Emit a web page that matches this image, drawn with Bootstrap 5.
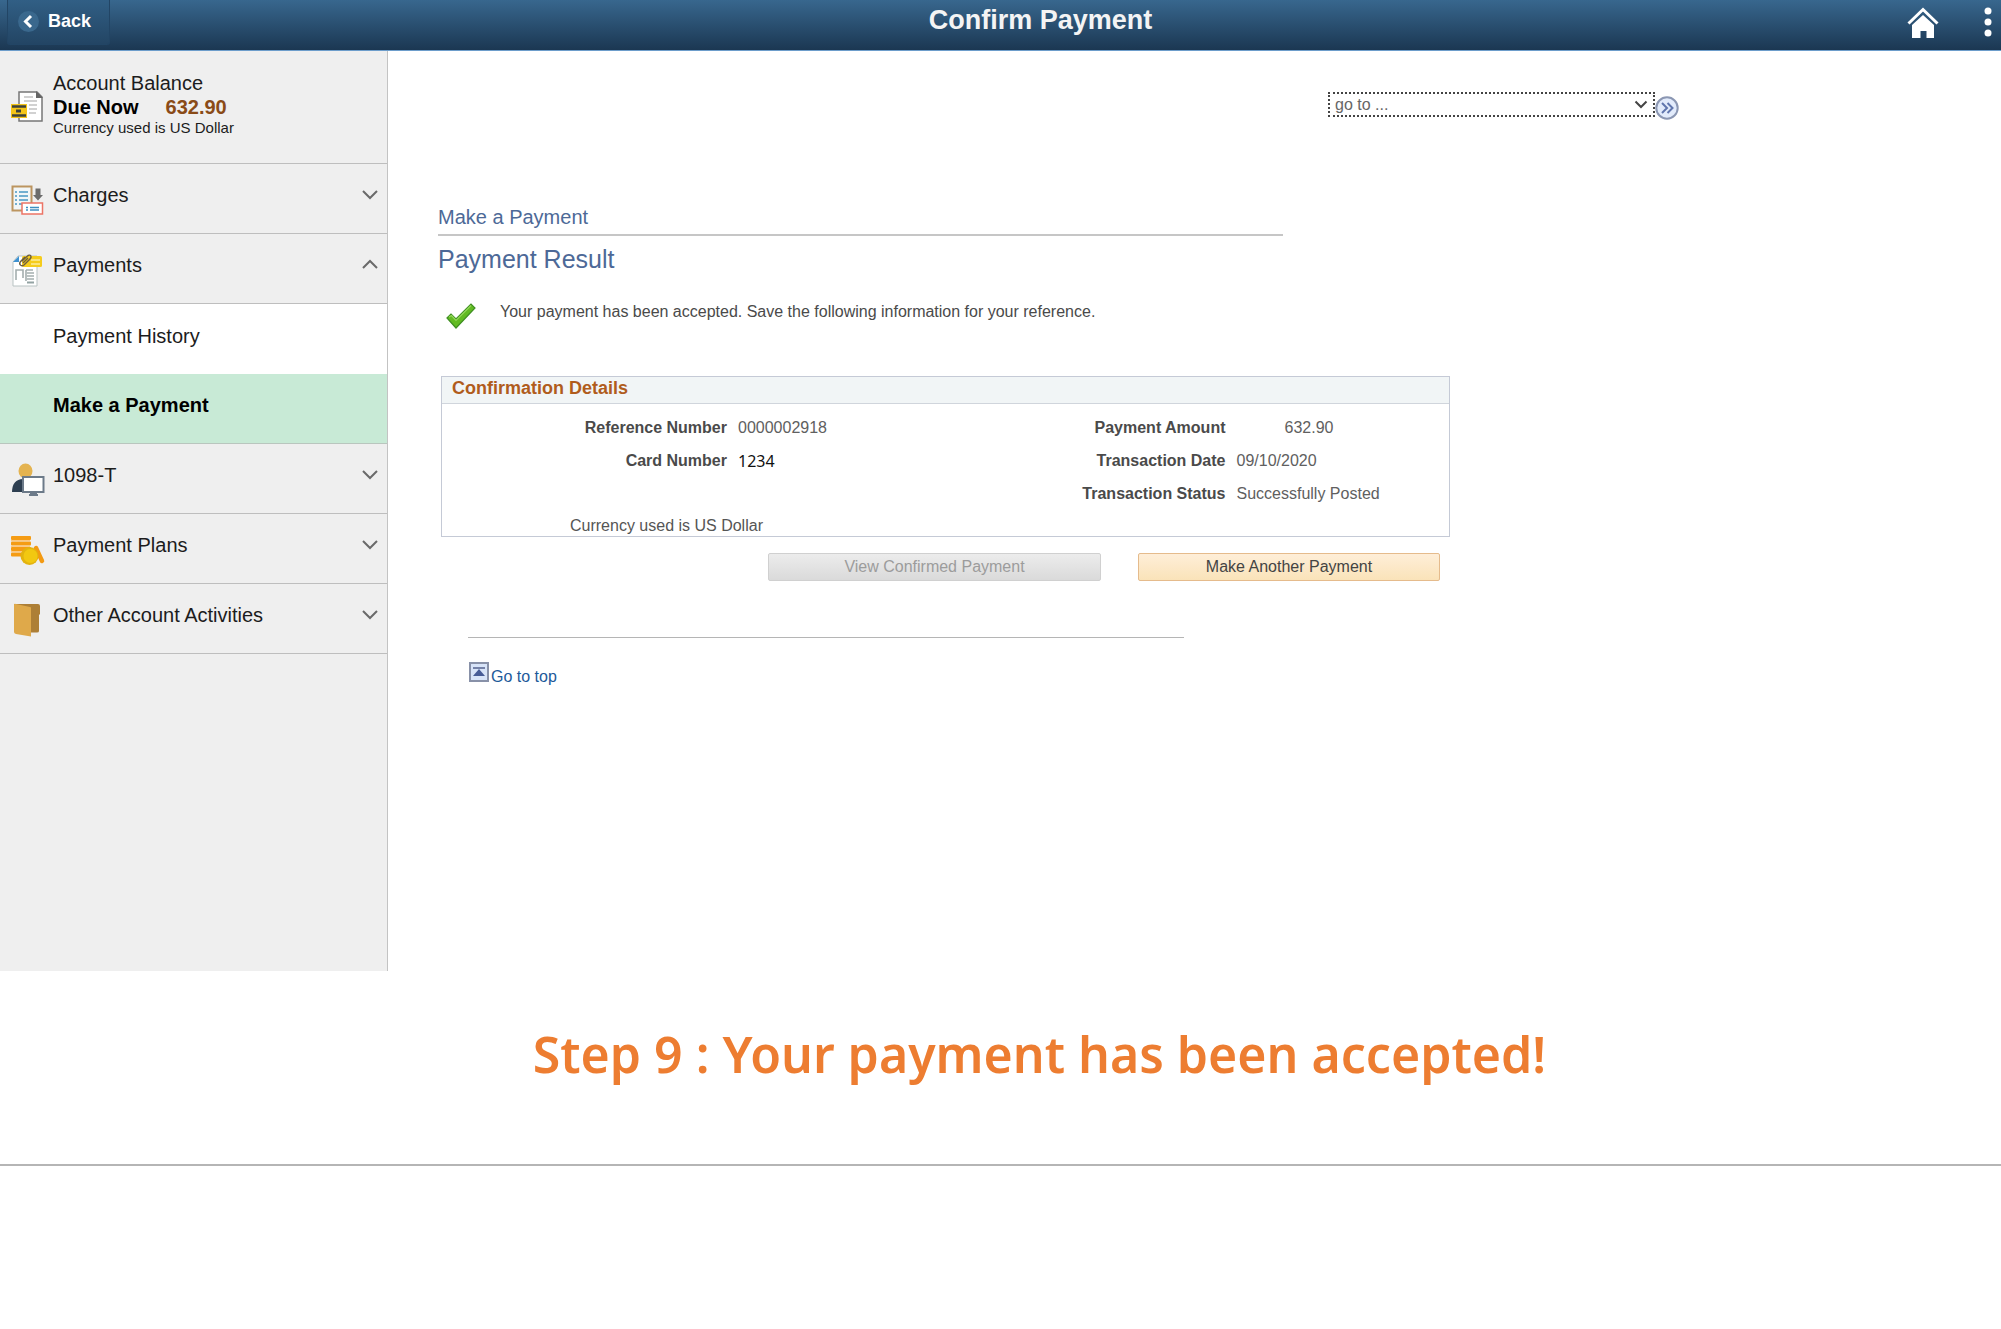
<!DOCTYPE html>
<html lang="en">
<head>
<meta charset="utf-8">
<meta name="viewport" content="width=device-width, initial-scale=1">
<title>Confirm Payment</title>
<link href="https://cdn.jsdelivr.net/npm/bootstrap@5.3.0/dist/css/bootstrap.min.css" rel="stylesheet">
<style>
  body { font-family: "Liberation Sans", Arial, sans-serif; font-size: 16px; line-height: 20px; color: #4a4a4a; background: #fff; }
  .topbar { height: 51px; background: linear-gradient(#38678e, #1b3752); border-bottom: 1px solid #6d9dcb; }
  .back-btn { height: 45px; margin-left: 7px; padding: 0 18px 2px 10px; font-size: 18px; font-weight: 700; color: #fff; background: linear-gradient(#315f85, #234564); border: 1px solid #224565; border-top: 0; border-radius: 0 0 3px 3px; gap: 9px; }
  .page-title { font-size: 27px; line-height: 32px; font-weight: 700; color: #f4f4f4; padding: 4px 0 0 70px; }
  .bar-tools { width: 100px; padding: 0 8px 6px 5px; }

  .shell { min-height: 920px; }
  .side { width: 388px; background: #efefef; border-right: 1px solid #c3c3c3; font-size: 20px; line-height: 24px; color: #1c1c1c; }
  .balance { height: 113px; padding: 0 0 0 11px; border-bottom: 1px solid #bebebe; }
  .balance-text { padding-bottom: 6px; line-height: 24px; }
  .balance-note { font-size: 15px; line-height: 18px; }
  .due { color: #8a4b17; margin-left: 27px; }
  .side-row { height: 70px; padding: 0 9px 0 11px; gap: 8px; width: 100%; border: 0; border-bottom: 1px solid #bebebe; background: #efefef; color: inherit; text-align: left; text-decoration: none; }
  .side-row .lift { padding-bottom: 7px; }
  .side-row .ico { margin-top: 3px; }
  .side-row.sub { padding-left: 53px; border-bottom: 0; background: #fff; }
  .side-row.sub.current { background: #c8ead6; color: #000; font-weight: 700; border-bottom: 1px solid #b9c6be; }
  .ico { width: 34px; height: 34px; flex: none; }

  .main-area { padding: 41px 50px 0; }
  .goto { padding-left: 890px; }
  .goto select { width: 327px; height: 25px; padding: 0 22px 0 5px; border: 2px dotted #444; outline: 0; appearance: none; color: #666; font-size: 16px; background: #fff; }
  .select-wrap svg { right: 7px; top: 8px; pointer-events: none; }
  .round-go { width: 24px; height: 24px; margin-top: 4px; }
  .crumb { max-width: 845px; margin-top: 85px; font-size: 20px; line-height: 24px; padding-bottom: 5px; border-bottom: 2px solid #c6c6c6; color: #4d6997; }
  .result-title { font-size: 25px; line-height: 30px; margin: 8px 0 0; color: #4d6997; font-weight: 400; }
  .notice { gap: 24px; padding: 28px 0 0 8px; }
  .details { max-width: 1009px; margin: 46px 0 0 3px; border: 1px solid #c5cad6; }
  .details-head { font-size: 18px; line-height: 22px; height: 27px; margin: 0; padding: 0 0 0 10px; font-weight: 700; color: #b05c1c; background: #f1f5f6; border-bottom: 1px solid #d0d5dc; }
  .pairs { display: grid; grid-template-columns: 285px 1fr; column-gap: 11px; row-gap: 13px; line-height: 20px; padding-top: 14px; align-content: start; margin: 0; }
  .pairs.second { grid-template-columns: 280px 1fr; }
  .pairs dt { text-align: right; font-weight: 700; }
  .pairs dd { margin: 0; color: #606060; }
  .card-no { font-family: "Noto Sans", "Open Sans", sans-serif; color: #111 !important; }
  .amount { padding-left: 48px; }
  .currency { padding: 12px 0 0 128px; line-height: 20px; color: #555; }
  .actions { max-width: 1002px; gap: 37px; margin-top: 16px; }
  .act { height: 28px; padding: 0; border: 1px solid #e5bb8c; border-radius: 2px; font-size: 16px; color: #444; background: linear-gradient(#feeed8, #fae3b9); }
  .act-main { width: 302px; }
  .act-off { width: 333px; border-color: #d0d0d0; background: linear-gradient(#ececec, #dadada); color: #9c9c9c; }
  .foot-rule { max-width: 716px; margin: 56px 0 0 30px; border-top: 1px solid #b5b5b5; }
  .to-top { margin: 24px 0 0 31px; gap: 2px; color: #1d5a9a; text-decoration: none; }
  .to-top span { padding-top: 5px; }

  .step { font-family: "Noto Sans", "Open Sans", sans-serif; font-size: 50px; line-height: 70px; font-weight: 600; color: #ed7d31; margin: 0; padding: 48px 0 75px 78px; border-bottom: 2px solid #b5b5b5; }
</style>
<script src="https://cdn.jsdelivr.net/npm/bootstrap@5.3.0/dist/js/bootstrap.bundle.min.js"></script>
</head>
<body>
<header class="topbar d-flex align-items-center">
  <button type="button" class="back-btn d-flex align-items-center align-self-start">
    <svg width="21" height="21" viewBox="0 0 21 21" aria-hidden="true"><circle cx="10.500" cy="10.500" r="10.500" fill="#3a688d"/><path d="M13 5 7.500 10.500 13 16" fill="none" stroke="#fff" stroke-width="3"/></svg>
    Back
  </button>
  <h1 class="page-title flex-grow-1 text-center align-self-start mb-0">Confirm Payment</h1>
  <div class="bar-tools d-flex align-items-center justify-content-between">
    <a href="#" aria-label="Home"><svg class="d-block" width="34" height="34" viewBox="0 0 34 34"><path d="M6 20 17 10 28 20V33H20.500V26H14.500V33H6Z" fill="#fff"/><path d="M2.500 18.500 17 4.500 31.500 18.500" fill="none" stroke="#fff" stroke-width="3"/></svg></a>
    <a href="#" aria-label="Actions"><svg class="d-block" width="10" height="34" viewBox="0 0 10 34"><g fill="#fff"><circle cx="5" cy="6" r="3.500"/><circle cx="5" cy="17" r="3.500"/><circle cx="5" cy="28" r="3.500"/></g></svg></a>
  </div>
</header>

<div class="shell d-flex">
  <nav class="side flex-shrink-0" aria-label="Account">
    <div class="balance d-flex align-items-center gap-2">
      <svg class="ico" viewBox="0 0 34 34" aria-hidden="true"><path d="M8 2H26L31 7V31H8Z" fill="#fff" stroke="#777" stroke-width="1.500"/><path d="M25 1 32 8H25Z" fill="#666"/><path d="M13 7H22M13 11H26M18 15H26M18 19H26M18 23H25" stroke="#c2c2c2" stroke-width="1.500"/><path d="M0 14H16V28H0Z" fill="#f5c518"/><path d="M1 16.500H15M1 25.500H15" stroke="#3d423c" stroke-width="2.500"/><path d="M5 21H10" stroke="#3d423c" stroke-width="3"/></svg>
      <div class="balance-text">
        <div>Account Balance</div>
        <div class="fw-bold text-black">Due Now<span class="due">632.90</span></div>
        <div class="balance-note">Currency used is US Dollar</div>
      </div>
    </div>
    <button type="button" class="side-row d-flex align-items-center">
      <svg class="ico" viewBox="0 0 34 34" aria-hidden="true"><rect x="1.500" y="3.500" width="19" height="24" fill="#f2f6f7" stroke="#bc9560" stroke-width="2"/><path d="M4 9H6M8 9H17M4 13H6M8 13H17M4 17H6M8 17H17M4 21H6M8 21H17" stroke="#4a98c4" stroke-width="1.700"/><rect x="11" y="20" width="20.500" height="11" fill="#fff" stroke="#ec7466" stroke-width="1.500"/><path d="M15 24.500H17M19 24.500H28M15 27H17M19 27H28" stroke="#3f8fc0" stroke-width="1.600"/><path d="M24.500 5.500H29.500V12H32L27 17.500 22 12H24.500Z" fill="#6c6c6c"/></svg>
      <span class="flex-grow-1 lift">Charges</span>
      <svg class="mb-2" width="16" height="11" viewBox="0 0 16 11" aria-hidden="true"><path d="M1 2 8 9 15 2" fill="none" stroke="#6a6a6a" stroke-width="2"/></svg>
    </button>
    <button type="button" class="side-row d-flex align-items-center" aria-expanded="true">
      <svg class="ico" viewBox="0 0 34 34" aria-hidden="true"><path d="M7 3H26V33H2V9Z" fill="#fff" stroke="#b9c3c3"/><path d="M2 9 8 3V9Z" fill="#3f92d1"/><rect x="11" y="3" width="20" height="11" rx="1.500" fill="#f5cc1c"/><path d="M20 7H29M20 11H29" stroke="#fbeb9a" stroke-width="1.500"/><path d="M5 27V17H12V25M15 17H22M16 20H23M16 23H23M16 26H23M15 17V28" fill="none" stroke="#a4aeae" stroke-width="1.600"/><path d="M16 29.500H23" stroke="#93a3a3" stroke-width="2"/><path d="M11 8 17 2.500C20 1 21 4 19 6L13 12C10 14 7 11 10 8L14 4M12 10 17 5" fill="none" stroke="#6b5d40" stroke-width="1.400"/></svg>
      <span class="flex-grow-1 lift">Payments</span>
      <svg class="mb-2" width="16" height="11" viewBox="0 0 16 11" aria-hidden="true"><path d="M1 9 8 2 15 9" fill="none" stroke="#6a6a6a" stroke-width="2"/></svg>
    </button>
    <a href="#" class="side-row sub d-flex align-items-center"><span class="lift">Payment History</span></a>
    <a href="#" class="side-row sub current d-flex align-items-center" aria-current="page"><span class="lift">Make a Payment</span></a>
    <button type="button" class="side-row d-flex align-items-center">
      <svg class="ico" viewBox="0 0 34 34" aria-hidden="true"><path d="M1 29C1 21 5 16 12 16V29Z" fill="#2d3e50"/><ellipse cx="14.500" cy="8" rx="7" ry="7.500" fill="#e4b350"/><rect x="12" y="14" width="20.500" height="15" fill="#fff" stroke="#6c7a89" stroke-width="2"/><path d="M19 30H26M18 32H27" stroke="#6c7a89" stroke-width="2"/></svg>
      <span class="flex-grow-1 lift">1098-T</span>
      <svg class="mb-2" width="16" height="11" viewBox="0 0 16 11" aria-hidden="true"><path d="M1 2 8 9 15 2" fill="none" stroke="#6a6a6a" stroke-width="2"/></svg>
    </button>
    <button type="button" class="side-row d-flex align-items-center">
      <svg class="ico" viewBox="0 0 34 34" aria-hidden="true"><g fill="#f59c14"><rect y="3" width="20" height="4" rx="1"/><rect y="8.500" width="20" height="4" rx="1"/><rect y="14" width="20" height="4" rx="1"/><rect y="19.500" width="17" height="4" rx="1"/></g><path d="M0 7.700H19M0 13.300H19M0 18.700H17" stroke="#fbc984" stroke-width="1.200"/><path d="M25 15 31 28" stroke="#f39a13" stroke-width="4.500" stroke-linecap="round"/><circle cx="18.500" cy="23" r="9" fill="#e3b30f"/><circle cx="19.500" cy="23" r="7" fill="#f2c811"/></svg>
      <span class="flex-grow-1 lift">Payment Plans</span>
      <svg class="mb-2" width="16" height="11" viewBox="0 0 16 11" aria-hidden="true"><path d="M1 2 8 9 15 2" fill="none" stroke="#6a6a6a" stroke-width="2"/></svg>
    </button>
    <button type="button" class="side-row d-flex align-items-center">
      <svg class="ico" viewBox="0 0 34 34" aria-hidden="true"><path d="M3 1H27Q29 1 29 3V11L28 12V28Q28 29.500 26 29.500H18Z" fill="#ad7f36"/><path d="M3 2Q3 0 5 1L19 4Q20 4 20 5V33.500L5 31Q3 30.500 3 29Z" fill="#dfa94a"/></svg>
      <span class="flex-grow-1 lift">Other Account Activities</span>
      <svg class="mb-2" width="16" height="11" viewBox="0 0 16 11" aria-hidden="true"><path d="M1 2 8 9 15 2" fill="none" stroke="#6a6a6a" stroke-width="2"/></svg>
    </button>
  </nav>

  <main class="main-area flex-grow-1">
    <form class="goto d-flex align-items-start">
      <div class="select-wrap position-relative">
        <select id="goto" class="d-block rounded-0" aria-label="Go to page"><option>go to ...</option></select>
        <svg class="position-absolute" width="14" height="9" viewBox="0 0 14 9" aria-hidden="true"><path d="M1.500 1.500 7 7 12.500 1.500" fill="none" stroke="#444" stroke-width="2"/></svg>
      </div>
      <button type="button" class="round-go border-0 bg-transparent p-0" aria-label="Go">
        <svg class="d-block" width="24" height="24" viewBox="0 0 24 24"><circle cx="12" cy="12" r="10.700" fill="#e2ebfb" stroke="#8b97b3" stroke-width="2"/><path d="M7 7 12 12 7 17M12.500 7 17.500 12 12.500 17" fill="none" stroke="#6076ad" stroke-width="2"/></svg>
      </button>
    </form>

    <div class="crumb">Make a Payment</div>
    <h2 class="result-title">Payment Result</h2>
    <div class="notice d-flex align-items-start">
      <svg class="flex-shrink-0" width="30" height="28" viewBox="0 0 30 28" aria-hidden="true"><path d="M1 16 5 12 10 17 25 2 29 6 10 26Z" fill="#62bb22" stroke="#3f8f22" stroke-width="1.200"/><path d="M3 15 5.500 13.500 10 18.500 25 3.500" fill="none" stroke="#93d65a" stroke-width="1.200"/></svg>
      <p class="mb-0">Your payment has been accepted. Save the following information for your reference.</p>
    </div>

    <section class="details">
      <h3 class="details-head">Confirmation Details</h3>
      <div class="row g-0">
        <div class="col-6">
          <dl class="pairs">
            <dt>Reference Number</dt><dd>0000002918</dd>
            <dt>Card Number</dt><dd class="card-no">1234</dd>
          </dl>
        </div>
        <div class="col-6">
          <dl class="pairs second">
            <dt>Payment Amount</dt><dd class="amount">632.90</dd>
            <dt>Transaction Date</dt><dd>09/10/2020</dd>
            <dt>Transaction Status</dt><dd>Successfully Posted</dd>
          </dl>
        </div>
      </div>
      <div class="currency">Currency used is US Dollar</div>
    </section>

    <div class="actions d-flex justify-content-end">
      <button type="button" class="act act-off" disabled>View Confirmed Payment</button>
      <button type="button" class="act act-main">Make Another Payment</button>
    </div>

    <div class="foot-rule"></div>
    <a href="#" class="to-top d-inline-flex align-items-start">
      <svg width="20" height="20" viewBox="0 0 20 20" aria-hidden="true"><rect x="1" y="1" width="18" height="18" fill="#d8e4f8" stroke="#8891a8" stroke-width="2"/><path d="M4 6H16" stroke="#7582a8" stroke-width="2"/><path d="M10 7 16 14H4Z" fill="#475c96"/></svg>
      <span>Go to top</span>
    </a>
  </main>
</div>

<h2 class="step text-center">Step 9 : Your payment has been accepted!</h2>
</body>
</html>
